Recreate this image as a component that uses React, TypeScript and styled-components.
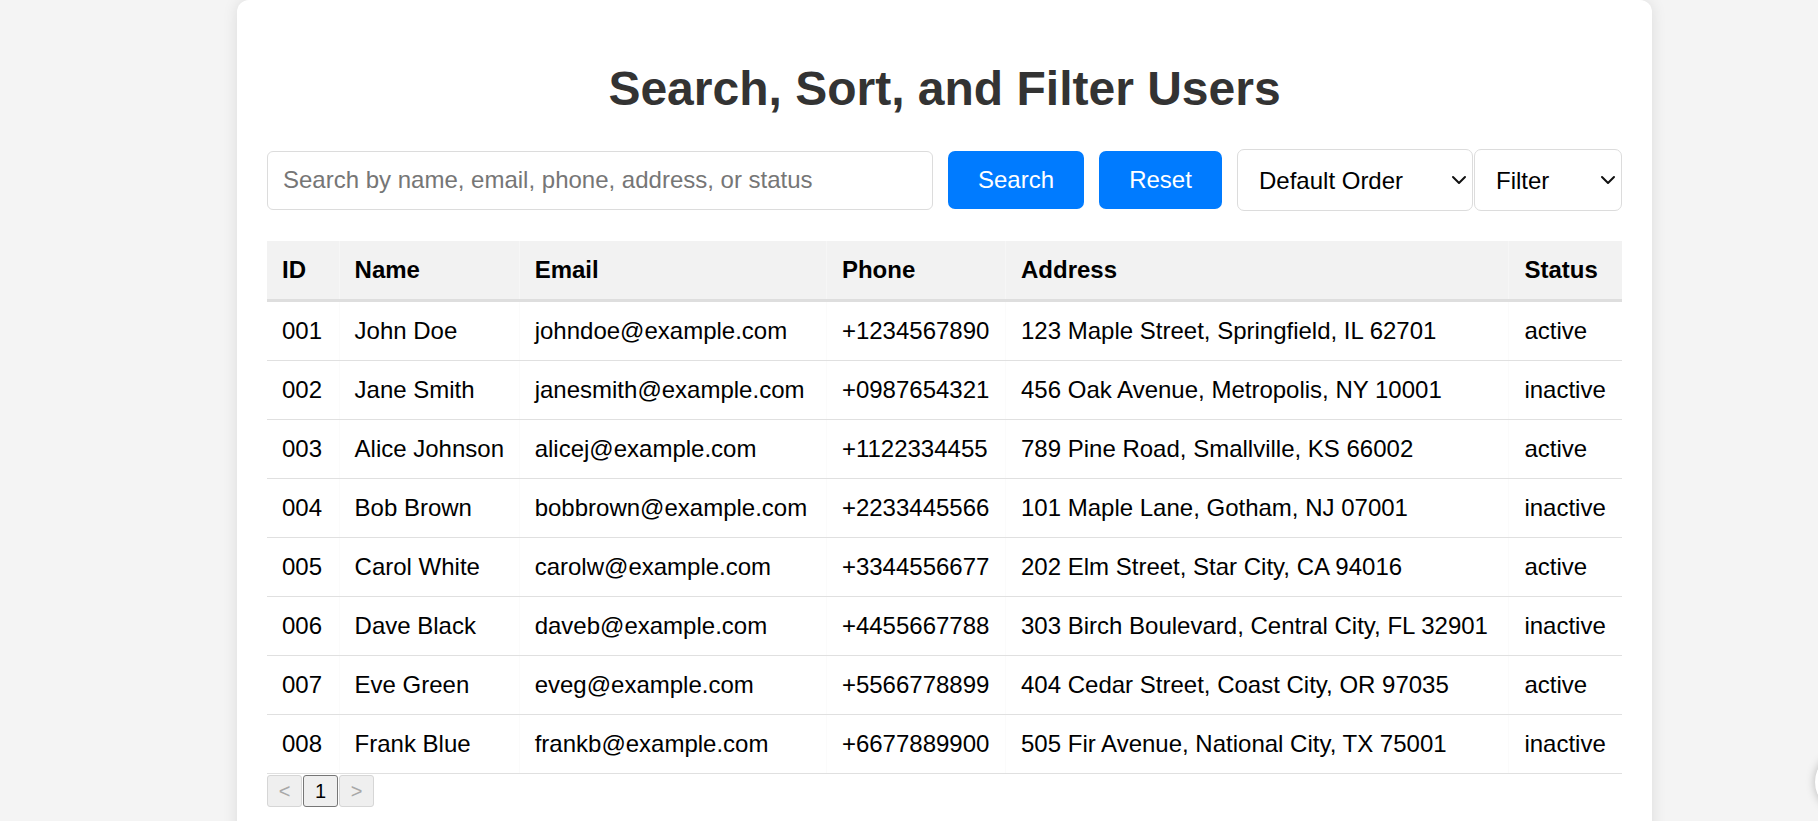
import React from "react";
import styled, { createGlobalStyle } from "styled-components";
import { ChevronDown } from "lucide-react";

const GlobalStyle = createGlobalStyle`
  html, body {
    margin: 0;
    padding: 0;
    background: #f4f4f4;
    font-family: "Liberation Sans", Arial, sans-serif;
    overflow: hidden;
  }
  * { box-sizing: border-box; }
`;

const Page = styled.div`
  min-height: 821px;
  padding-left: 237px;
`;

const Card = styled.main`
  width: 1415px;
  min-height: 860px;
  background: #fff;
  border-radius: 12px;
  box-shadow: 0 0 15px rgba(0, 0, 0, 0.1);
  padding: 30px;
`;

const Title = styled.h1`
  margin: 32px 0 33px;
  text-align: center;
  font-size: 48px;
  line-height: 54px;
  font-weight: 700;
  color: #333;
`;

const Toolbar = styled.div`
  display: flex;
  align-items: center;
  gap: 15px;
  height: 62px;
  margin-bottom: 30px;
`;

const SearchInput = styled.input`
  flex: 1;
  height: 59px;
  padding: 0 15px;
  font-family: inherit;
  font-size: 24px;
  color: #000;
  border: 1px solid #dcdcdc;
  border-radius: 6px;
  outline: none;
  &::placeholder { color: #767676; }
`;

const ActionButton = styled.button<{ $w: number }>`
  width: ${(p) => p.$w}px;
  height: 58px;
  border: none;
  border-radius: 7px;
  background: #007bff;
  color: #fff;
  font-family: inherit;
  font-size: 24px;
  cursor: pointer;
`;

const Selects = styled.div`
  display: flex;
  gap: 1px;
`;

const SelectWrap = styled.div<{ $w: number }>`
  position: relative;
  width: ${(p) => p.$w}px;
  height: 62px;
`;

const Select = styled.select`
  appearance: none;
  -webkit-appearance: none;
  width: 100%;
  height: 100%;
  padding: 0 30px 0 21px;
  font-family: inherit;
  font-size: 24px;
  color: #000;
  background: #fff;
  border: 1px solid #dcdcdc;
  border-radius: 7px;
  outline: none;
`;

const Chevron = styled(ChevronDown)`
  position: absolute;
  right: 2px;
  top: 19px;
  pointer-events: none;
  color: #111;
`;

const Table = styled.table`
  width: 100%;
  table-layout: fixed;
  border-collapse: collapse;
  font-size: 24px;
  color: #000;
`;

const Col = styled.col<{ $w: number }>`
  width: ${(p) => p.$w}px;
`;

const HeadCell = styled.th`
  text-align: left;
  font-weight: 700;
  background: #f2f2f2;
  padding: 15px;
  line-height: 28px;
  border-bottom: 3px solid #dedede;
  border-left: 1px solid #f6f6f6;
  &:first-child { border-left: none; }
`;

const Cell = styled.td`
  padding: 15px;
  line-height: 28px;
  border-bottom: 1px solid #e0e0e0;
  border-left: 1px solid #fbfbfb;
  white-space: nowrap;
  &:first-child { border-left: none; }
`;

const Pager = styled.div`
  display: flex;
  gap: 1px;
  margin-top: 1px;
`;

const PageButton = styled.button<{ $active?: boolean }>`
  width: 35px;
  height: 32px;
  padding: 0;
  font-family: inherit;
  font-size: 20px;
  line-height: 30px;
  background: #efefef;
  color: ${(p) => (p.$active ? "#000" : "#a8a8a8")};
  border: 1px solid ${(p) => (p.$active ? "#767676" : "#d6d6d6")};
  border-radius: 3px;
`;

const EdgeBubble = styled.div`
  position: fixed;
  left: 1815px;
  top: 752px;
  width: 60px;
  height: 60px;
  border-radius: 50%;
  background: #fff;
  box-shadow: 0 0 10px rgba(0, 0, 0, 0.25);
`;

const users = [
  ["001", "John Doe", "johndoe@example.com", "+1234567890", "123 Maple Street, Springfield, IL 62701", "active"],
  ["002", "Jane Smith", "janesmith@example.com", "+0987654321", "456 Oak Avenue, Metropolis, NY 10001", "inactive"],
  ["003", "Alice Johnson", "alicej@example.com", "+1122334455", "789 Pine Road, Smallville, KS 66002", "active"],
  ["004", "Bob Brown", "bobbrown@example.com", "+2233445566", "101 Maple Lane, Gotham, NJ 07001", "inactive"],
  ["005", "Carol White", "carolw@example.com", "+3344556677", "202 Elm Street, Star City, CA 94016", "active"],
  ["006", "Dave Black", "daveb@example.com", "+4455667788", "303 Birch Boulevard, Central City, FL 32901", "inactive"],
  ["007", "Eve Green", "eveg@example.com", "+5566778899", "404 Cedar Street, Coast City, OR 97035", "active"],
  ["008", "Frank Blue", "frankb@example.com", "+6677889900", "505 Fir Avenue, National City, TX 75001", "inactive"],
];

const colWidths = [72, 180, 307, 179, 503, 113];
const headers = ["ID", "Name", "Email", "Phone", "Address", "Status"];

export default function App() {
  return (
    <Page>
      <GlobalStyle />
      <Card>
        <Title>Search, Sort, and Filter Users</Title>
        <Toolbar>
          <SearchInput placeholder="Search by name, email, phone, address, or status" />
          <ActionButton $w={136}>Search</ActionButton>
          <ActionButton $w={123}>Reset</ActionButton>
          <Selects>
            <SelectWrap $w={236}>
              <Select defaultValue="default">
                <option value="default">Default Order</option>
                <option value="asc">Name A-Z</option>
                <option value="desc">Name Z-A</option>
              </Select>
              <Chevron size={24} strokeWidth={2} />
            </SelectWrap>
            <SelectWrap $w={148}>
              <Select defaultValue="">
                <option value="">Filter</option>
                <option value="active">active</option>
                <option value="inactive">inactive</option>
              </Select>
              <Chevron size={24} strokeWidth={2} />
            </SelectWrap>
          </Selects>
        </Toolbar>
        <Table>
          <colgroup>
            {colWidths.map((w, i) => (
              <Col key={i} $w={w} />
            ))}
          </colgroup>
          <thead>
            <tr>
              {headers.map((h) => (
                <HeadCell key={h}>{h}</HeadCell>
              ))}
            </tr>
          </thead>
          <tbody>
            {users.map((u) => (
              <tr key={u[0]}>
                {u.map((v, i) => (
                  <Cell key={i}>{v}</Cell>
                ))}
              </tr>
            ))}
          </tbody>
        </Table>
        <Pager>
          <PageButton disabled>&lt;</PageButton>
          <PageButton $active>1</PageButton>
          <PageButton disabled>&gt;</PageButton>
        </Pager>
      </Card>
      <EdgeBubble />
    </Page>
  );
}
